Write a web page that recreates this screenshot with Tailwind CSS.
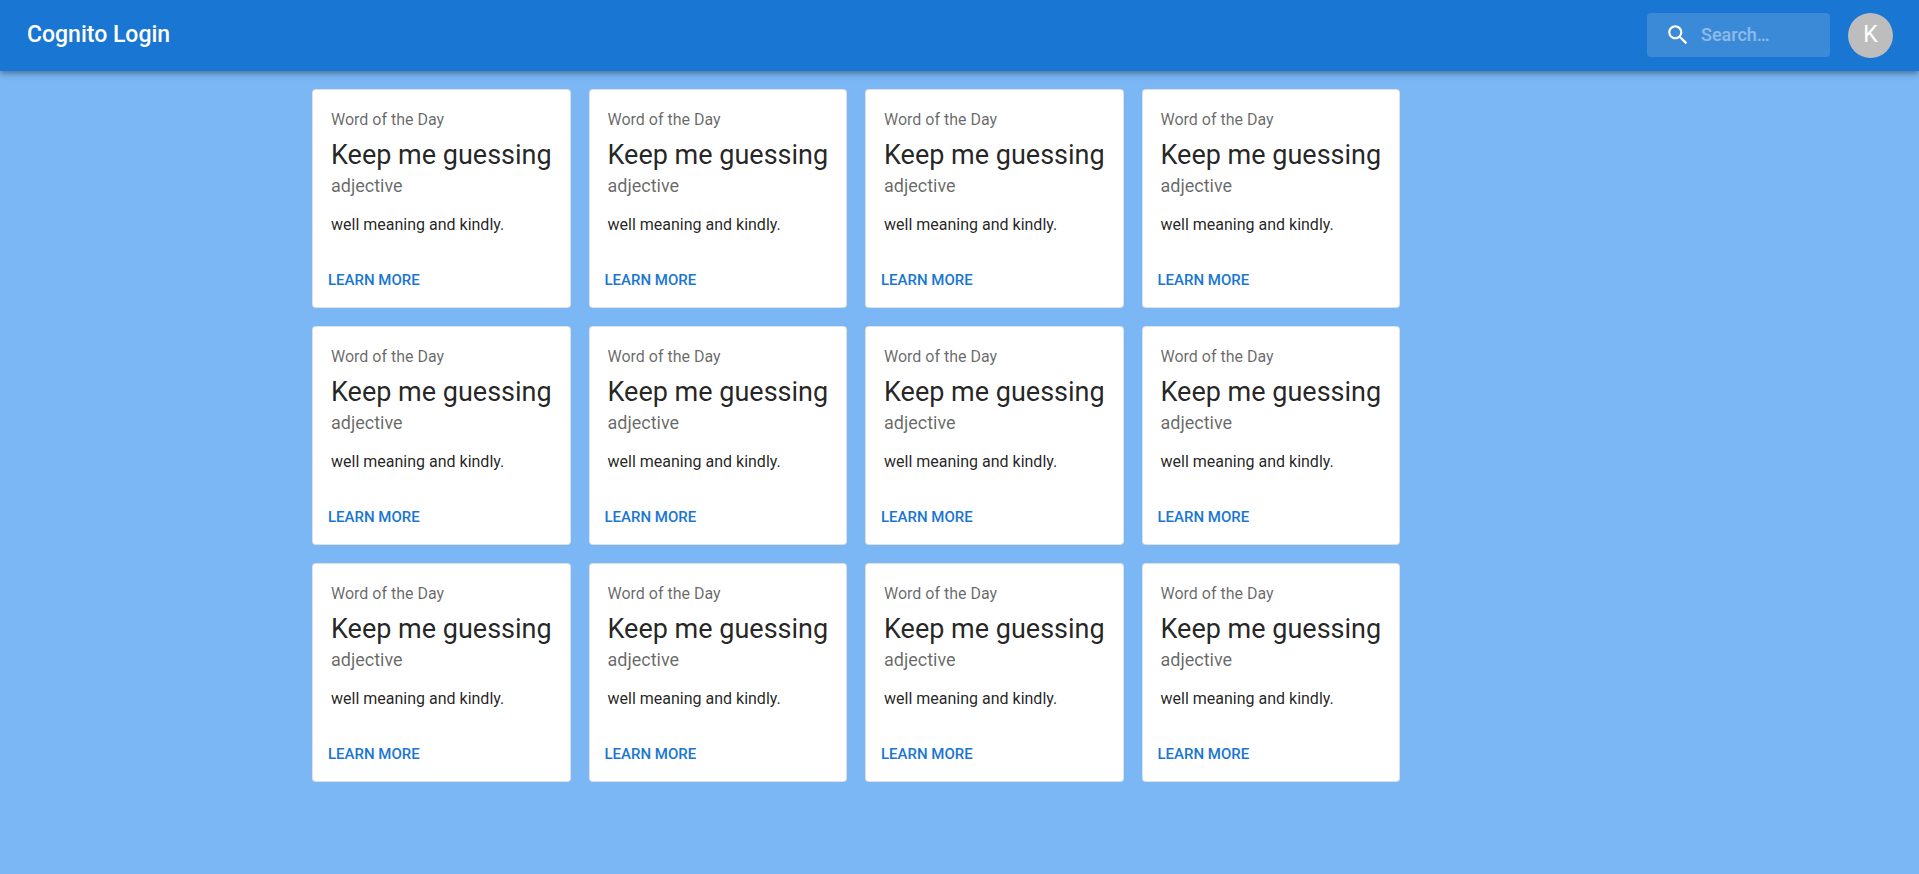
<!DOCTYPE html>
<html lang="en">
<head>
<meta charset="utf-8">
<meta name="viewport" content="width=device-width, initial-scale=1">
<title>Cognito Login</title>
<script src="https://cdn.jsdelivr.net/npm/@tailwindcss/browser@4"></script>
</head>
<body class="min-h-screen bg-[#7bb7f5] font-[Roboto,sans-serif] text-black/87">
<header class="relative flex min-h-[71px] items-center bg-[#1976d2] pr-[26px] pb-px pl-[27px] text-white shadow-[0_2px_4px_-1px_rgba(0,0,0,0.2),0_4px_5px_0_rgba(0,0,0,0.14),0_1px_10px_0_rgba(0,0,0,0.12)]">
  <h1 class="grow text-[23px] leading-[36px] font-medium">Cognito Login</h1>
  <label class="flex h-11 w-[183px] items-center gap-[10px] rounded bg-white/15 pl-[18px]">
    <svg class="size-[26px] shrink-0" viewBox="0 0 24 24" fill="currentColor" aria-hidden="true"><path d="M15.5 14h-.79l-.28-.27C15.41 12.59 16 11.11 16 9.5 16 5.91 13.09 3 9.5 3S3 5.91 3 9.5 5.91 16 9.5 16c1.61 0 3.09-.59 4.23-1.57l.27.28v.79l5 4.99L20.49 19l-4.99-5zm-6 0C7.01 14 5 11.99 5 9.5S7.01 5 9.5 5 14 7.01 14 9.5 11.99 14 9.5 14z"/></svg>
    <input type="search" aria-label="Search" placeholder="Search…" class="w-full min-w-0 bg-transparent pb-px text-[18px] font-medium outline-none placeholder:text-white/42">
  </label>
  <button type="button" aria-label="Account" class="ml-[18px] flex size-[45px] items-center justify-center rounded-full bg-[#bdbdbd] pb-px text-[23px] leading-none">K</button>
</header>
<main class="mx-auto max-w-[1295px] pt-[18px]">
  <div id="cards" class="grid max-w-[1088px] grid-cols-4 gap-[18px]"></div>
</main>
<template id="card">
  <article class="rounded border border-black/12 bg-white">
    <div class="p-[18px]">
      <p class="mb-[7px] text-[16px] leading-[23px] text-black/60">Word of the Day</p>
      <h2 class="text-[27px] leading-[35px] whitespace-nowrap">Keep me guessing</h2>
      <p class="mb-[15px] text-[18px] leading-[26px] text-black/60">adjective</p>
      <p class="text-[16px] leading-[22px]">well meaning and kindly.</p>
    </div>
    <div class="px-[9px] pt-[9px] pb-[10px]">
      <button type="button" class="rounded px-[6px] py-1 text-[15px] leading-[26px] font-medium text-[#1976d2] uppercase">Learn More</button>
    </div>
  </article>
</template>
<script>
  const grid = document.getElementById('cards');
  const card = document.getElementById('card');
  for (let i = 0; i < 12; i++) grid.append(card.content.cloneNode(true));
</script>
</body>
</html>
